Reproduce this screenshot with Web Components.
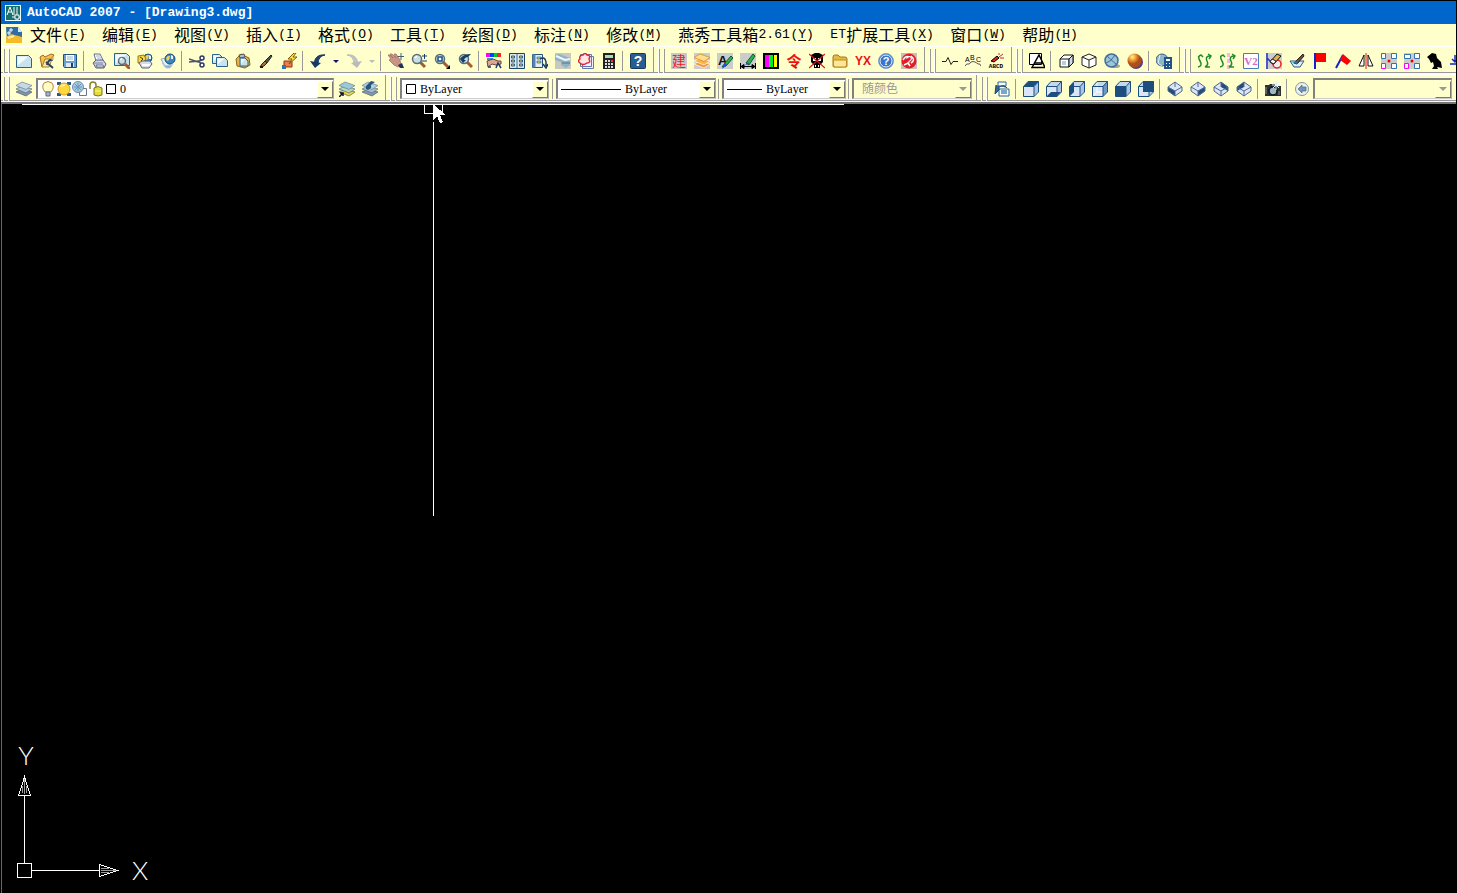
<!DOCTYPE html>
<html lang="zh-CN">
<head>
<meta charset="utf-8">
<title>AutoCAD 2007 - [Drawing3.dwg]</title>
<style>
  html, body { margin: 0; background: #000; }
  body { font: 16px/22px "Liberation Mono", "Noto Sans CJK SC", monospace; color: #000; }
</style>
</head>
<body>
<cad-window>
  <title-bar>AutoCAD 2007 - [Drawing3.dwg]</title-bar>
  <menu-bar>
    <menu-entry key="F">文件</menu-entry>
    <menu-entry key="E">编辑</menu-entry>
    <menu-entry key="V">视图</menu-entry>
    <menu-entry key="I">插入</menu-entry>
    <menu-entry key="O">格式</menu-entry>
    <menu-entry key="T">工具</menu-entry>
    <menu-entry key="D">绘图</menu-entry>
    <menu-entry key="N">标注</menu-entry>
    <menu-entry key="M">修改</menu-entry>
    <menu-entry key="Y" tail="2.61">燕秀工具箱</menu-entry>
    <menu-entry key="X" head="ET">扩展工具</menu-entry>
    <menu-entry key="W">窗口</menu-entry>
    <menu-entry key="H">帮助</menu-entry>
  </menu-bar>
  <tool-row>
    <tool-strip icons="new open save | print preview publish web | cut copy paste brush match | undo drop redo dropoff | pan zoomrt zoomwin zoomprev | props center palette sheet markup calc | help"></tool-strip>
    <tool-strip icons="jian layers2 textedit dimedit colors ling skull folder yx helpround helpred"></tool-strip>
    <tool-strip icons="breakline arctext abcd"></tool-strip>
    <tool-strip icons="wipe | cube3 hex globe ball | globecalc"></tool-strip>
    <tool-strip open icons="swirl swirl2 v2 erase bowl flag flag2 mirror array array2 bird downarrow"></tool-strip>
  </tool-row>
  <tool-row>
    <tool-strip icons="layers">
      <combo-box label="图层" value="0" size="layer" art="layerstate"></combo-box>
      <tool-strip bare icons="layerset layerprev"></tool-strip>
    </tool-strip>
    <tool-strip>
      <combo-box label="颜色" value="ByLayer" size="color" art="swatch"></combo-box>
      <tool-sep></tool-sep>
      <combo-box label="线型" value="ByLayer" size="ltype" art="line64"></combo-box>
      <tool-sep></tool-sep>
      <combo-box label="线宽" value="ByLayer" size="weight" art="line36"></combo-box>
      <tool-sep></tool-sep>
      <combo-box label="打印样式" value="随颜色" size="plot" off></combo-box>
    </tool-strip>
    <tool-strip open icons="views | vtop vbottom vleft vright vfront vback | isw ise ine inw | camera | prev">
      <combo-box label="视图" value="" size="fill" off></combo-box>
    </tool-strip>
  </tool-row>
  <drawing-area></drawing-area>
</cad-window>

<script>
const N = '#1c4f80', L = '#a9c4e4';
const star = (x, y) => `<path d="M${x} ${y-2}v4M${x-2} ${y}h4" stroke="#fff"/>`;
const cube = (faces) => `<path d="M1 5L5 1H15V11L11 15H1Z" fill="#dbe5f8"/><path d="M11 5L15 1V11L11 15Z" fill="${L}"/><path d="M1 5L5 1H15L11 5Z" fill="#c4d8f0"/>${faces}<path d="M.5 5.5H11V15.5H.5ZM.5 5.5L5 .5H15.5L11 5.5M15.5 .5V11L11 15.5" fill="none" stroke="${N}"/>`;
const iso = (f) => `<path d="M8 1L15 6V10L8 15L1 10V6Z" fill="#dce6fa"/>${f}<path d="M8 1L15 6V10L8 15L1 10V6ZM1 6L8 10L15 6M8 10V15M8 1V6" fill="none" stroke="#52688c"/>`;
const lens = (x, y) => `<path d="M${x+3} ${y+3}l5 5" stroke="#a65a32" stroke-width="3"/><circle cx="${x}" cy="${y}" r="4.5" fill="#c6dfe0" stroke="#5c6c78" stroke-width="1.5"/><path d="M${x-2} ${y-1}l2-2" stroke="#fff" stroke-width="1.5"/>`;
const page = (x, y, w, h) => `<path d="M${x} ${y}h${w-3}l3 3v${h-3}h-${w}z" fill="#c9e3ee" stroke="#2b6390"/><path d="M${x+1} ${y+h-2}l${w-4} -${h-3}h-${w-4}z" fill="#f4fbff"/>`;
const stack = (a, b, c) => `<path d="M0 11L6 8l10 3-6 4z" fill="${c}" stroke="#51606c" stroke-width=".7"/><path d="M0 8L6 5l10 3-6 4z" fill="${b}" stroke="#51707c" stroke-width=".7"/><path d="M0 4.5L6 1l10 3.5-6 4z" fill="${a}" stroke="#6b8294" stroke-width=".7"/>`;
const world = (x, y, r) => `<circle cx="${x}" cy="${y}" r="${r}" fill="#3b86bd" stroke="#1d4b7a"/><path d="M${x-r+1} ${y-1}q2-3 4-2l-1 4-2 1z" fill="#e8d25a"/><path d="M${x+1} ${y-r+1}l2 1v3l-2 0z" fill="#e7f3fa"/>`;
const printer = `<path d="M5 8L3 1h6l3 6z" fill="#fff" stroke="#5d6f99"/><path d="M5 3h4M6 5h4" stroke="#9fb0cc"/><path d="M2 10l3-3h7l3 4-2 4H5z" fill="#cfd5e8" stroke="#565f82"/><path d="M5 12h7l1 2H6z" fill="#fff" stroke="#656d8c"/><path d="M3 10h9" stroke="#7981a4"/>`;
const tx = (s, x, y, size, fill, extra = '') => `<text x="${x}" y="${y}" font-size="${size}" fill="${fill}" ${extra}>${s}</text>`;
const curl = (x, f) => f ? `<path d="M${x} 14q5-1 2-6t1-6M${x} 4l3-2 2 2" fill="none" stroke="#218a2d" stroke-width="1.5"/>` : `<path d="M${x} 14h4M${x+5} 3h-2q-4 1-2 5 2 4-2 6M${x+2} 1l3 2-2 3" fill="none" stroke="#218a2d" stroke-width="1.5"/>`;
const arr = (m) => `<path fill="#ccc" d="M0 0h16v16H0z"/><g fill="#fff" stroke="#3173b0"><path d="M.5 ${m ? 1.5 : .5}h${m ? 6 : 4}v${m ? 4 : 5}h-${m ? 6 : 4}zM10.5 .5h5v5h-5zM10.5 10.5h5v5h-5z"/></g><path d="M.5 10.5h4v5h-4z" fill="#fff" stroke="#f0f"/><circle cx="8" cy="8" r="1.5" fill="#e00"/>`;

const ICONS = {
  new: page(.5, 2.5, 15, 12),
  open: '<path d="M1 4l3-2 2 2 6-3 3 1-3 4-9 8z" fill="#f2c24c" stroke="#a56a28"/><path d="M3 14L6 6h7l-3 8z" fill="#ffe69a" stroke="#b57725"/><path d="M7 9l7 6M8 12q1-6 6-5" fill="none" stroke="#1e4765" stroke-width="2"/><path d="M11 5l4-2-1 5z" fill="#c9a66a"/>',
  save: '<path d="M1.5 1.5h13v13h-12l-1-1z" fill="#6ba0d0" stroke="#245282"/><path d="M4 2h8v6H4z" fill="#fff"/><path d="M5 4h6M5 6h6" stroke="#8fb4d5"/><path d="M4 10h8v4H4z" fill="#e1e9f2"/><path d="M9 10h2v4H9z" fill="#1a4270"/>',
  print: printer,
  preview: page(.5, .5, 15, 12) + '<g transform="translate(4 2)">' + lens(4, 6).replace('r="4.5"', 'r="3.5"') + '</g>',
  publish: world(11, 5, 4) + '<path d="M1 3l6-1 2 4-3 4H1z" fill="#f6d83a" stroke="#9b7722"/><path d="M3 4l3 2-2 2" fill="none" stroke="#4b3d10"/><path d="M2 10l3-2 8 0 2 3-3 4H5z" fill="#d7dcec" stroke="#5a6388"/><path d="M5 12h8" stroke="#fff" stroke-width="2"/>',
  web: '<path d="M1 6l7-1 3 6-6 3z" fill="#e8edf6" stroke="#96a9c2"/>' + world(10, 6, 5) + '<path d="M2 10q4 5 11 1l-3 4H6z" fill="#82acdc" stroke="#b8c9de"/>',
  cut: '<path d="M0 6l9 3 5-3M0 9l9-1 5 4" fill="none" stroke="#4a5368" stroke-width="1.5"/><circle cx="13" cy="5" r="2" fill="#fff" stroke="#283a70" stroke-width="1.5"/><circle cx="13" cy="12" r="2" fill="#fff" stroke="#283a70" stroke-width="1.5"/>',
  copy: page(.5, 1.5, 10, 9) + page(4.5, 4.5, 11, 9),
  paste: '<path d="M1 6l5-5 8 4 1 7-5 3-8-2z" fill="#e3b548" stroke="#8c6423"/><path d="M4 2l5-1 1 3-5 1z" fill="#b7bdc4" stroke="#555"/>' + page(5, 5, 8, 8),
  brush: '<path d="M7 8l6-6 1 1-5 7z" fill="#555" stroke="#222"/><path d="M7 8l2 2-3 3-4 1 2-3z" fill="#b46a40" stroke="#3b1c14"/><path d="M2 14h3" stroke="#251512" stroke-width="2"/>',
  match: '<path d="M3 8h8v6H3z" fill="#f07c42" stroke="#922e18"/><path d="M1 12h4v4H1z" fill="#2d74b4"/><path d="M13 0L7 6h4l-3 5 8-7h-4l3-4z" fill="#ffe12d" stroke="#795b13"/>',
  undo: '<path d="M5 12C3 6 8 1 15 2q-7 1-7 9z" fill="#203f70" stroke="#173864"/><path d="M0 8l5 7 6-5z" fill="#173864"/>',
  redo: '<path d="M11 12C13 6 8 1 1 2q7 1 7 9z" fill="#c4c4bc" stroke="#bbb"/><path d="M16 8l-5 7-6-5z" fill="#bbb"/>',
  drop: '<path d="M5 7h6l-3 3z" fill="#151560"/>',
  dropoff: '<path d="M5 7h6l-3 3z" fill="#bbb"/>',
  pan: '<path d="M0 2l2 0 3 3-3-4 2 0 4 4-2-4 2 0 4 6 1 5-3 2-4-2-5-5 2-1z" fill="#c99486" stroke="#9a655b" stroke-width=".7"/><path d="M10 12l4-2 2 5h-4z" fill="#1c3460"/><path d="M13 0v7M9.5 3.5h7" stroke="#37647c"/>',
  zoomrt: lens(6, 6) + '<path d="M11 3h5M13.5 1v5M11 8h5" stroke="#183f66"/>',
  zoomwin: lens(6, 6) + '<path d="M4 4h4v4H4z" fill="#fff" stroke="#175187" stroke-width="1.5"/><path d="M16 12v4h-4z"/>',
  zoomprev: lens(7, 6) + '<path d="M3 6q3-5 11-5l-3 3q-3 0-4 3h2l-3 3-3-4z" fill="#173f65"/>',
  props: '<path d="M0 0h4v4H0z" fill="#f0f"/><path d="M4 0h4v4H4z" fill="#04f"/><path d="M8 0h3v4H8z" fill="#0c3"/><path d="M11 0h4v4h-4z" fill="#f22"/><path d="M1 5h6v2H1z" fill="#39c"/><path d="M1 8l6-2 5 2 3 0v3l-5 1-4-1-4 3z" fill="#d9a898" stroke="#73412b"/><path d="M10 15l2-5 3 5M2 14h3" stroke="#173f75" fill="none" stroke-width="1.5"/>',
  center: '<path d="M.5 .5h15v15H.5z" fill="#dbe8f0" stroke="#1d4367"/><path d="M8 1v14" stroke="#35719f" stroke-width="1"/><g fill="#e6d34f" stroke="#315d84"><path d="M2.5 3h3v2h-3zM2.5 7h3v2h-3zM2.5 11h3v2h-3zM10.5 3h3v2h-3zM10.5 7h3v2h-3zM10.5 11h3v2h-3z"/></g>',
  palette: '<path d="M.5 1.5h10v13H.5z" fill="#e4eef8" stroke="#27527b"/><path d="M.5 1.5h3v13h-3z" fill="#5585b2"/><path d="M5 4h4v2H5zM5 8h4v2H5z" fill="#d9cc45" stroke="#326798" stroke-width=".7"/><path d="M8 6q5-3 6 3v4M11 11l3 4 2-4" fill="none" stroke="#173f6a" stroke-width="1.5"/>',
  sheet: '<path fill="#c9c9bd" d="M0 0h16v16H0z"/><path d="M0 2l4-1 11 4v7l-4 3-5-3V9L0 7z" fill="#91b3c6"/><path d="M1 3l9 4 5-1" stroke="#eef8fb" stroke-width="2" fill="none"/><path d="M7 10h8" stroke="#51758f"/>',
  markup: '<path d="M4.5 3.5h11v12h-11zM2.500 1.500h11v12h-11z" fill="#eef4ff" stroke="#6079b0"/><path d="M2 10q-3-2 0-4-1-4 3-4 2-3 4 0 4 0 2 4 2 4-2 4-4 3-7 0z" fill="#ffe7e7" stroke="#e22435" stroke-width="1.5"/>'.replaceAll('.500', '.5'),
  calc: '<path d="M2 0h12v16H2z" fill="#222"/><path d="M4 2h8v3H4z" fill="#a8dbb8"/><path d="M4 7h2v2H4zM7 7h2v2H7zM4 10h2v2H4zM7 10h2v2H7zM4 13h2v2H4zM7 13h2v2H7zM10 10h2v2h-2zM10 13h2v2h-2z" fill="#ddd"/><path d="M10 7h2v2h-2z" fill="#f33"/>',
  help: '<rect x=".5" y=".5" width="15" height="15" rx="1" fill="#2a5e92" stroke="#15395e"/>' + tx('?', 8, 13, 14, '#fff', 'text-anchor="middle" font-weight="bold"'),
  jian: '<path fill="#c8c8c8" d="M0 0h16v16H0z"/>' + tx('建', 8, 13, 14, '#e22', 'text-anchor="middle"'),
  layers2: '<path fill="#ccc" d="M0 0h16v16H0z"/>' + stack('#ffe08a', '#ffb347', '#f49536').replaceAll('#51707c', '#fff').replaceAll('#51606c', '#fff').replaceAll('#6b8294', '#d98020'),
  textedit: '<path fill="#ccc" d="M0 0h16v16H0z"/>' + tx('A', 1, 12, 13, '#111', 'font-weight="bold"') + '<path d="M5 14l3-4 6-7 2 2-7 8z" fill="#2db34a" stroke="#0b5930"/><path d="M8 10l2 2-5 4z" fill="#24f"/>',
  dimedit: '<path fill="#ccc" d="M0 0h16v16H0z"/><path d="M.5 10v6M15.5 10v6M1 13.5h14M1 13.5l3-2v4zM15 13.5l-3-2v4z" stroke="#000"/><path d="M6 10L13 1l2 2-6 9z" fill="#2db34a" stroke="#0b5930"/><path d="M5 12l3-3 1 2z" fill="#24f"/>',
  colors: '<path d="M0 0h16v16H0z"/><path d="M2 2h4v12H2z" fill="#f0f"/><path d="M6 2h4v12H6z" fill="#0e2"/><path d="M11 2h3v12h-3z" fill="#ff0"/>',
  ling: tx('令', 8, 14, 15, '#e11', 'text-anchor="middle" font-weight="bold"'),
  skull: '<path d="M2 2l4-2h4l4 2v7l-3 3v3H5v-3L2 9z"/><path d="M4 5h3v3H4zM9 5h3v3H9zM6 12h1v2H6zM9 12h1v2H9z" fill="#fff"/><path d="M0 1l16 14M16 1L0 15" stroke="#d11" stroke-width="1.2"/>',
  folder: '<path d="M1 4q0-2 2-2h3l2 2h5q2 0 2 2v7q0 1-1 1H2q-1 0-1-1z" fill="#e7b940" stroke="#a87918"/><path d="M1.5 7h13v5q0 2-2 2h-9q-2 0-2-2z" fill="#ffe796" stroke="#bb8c27"/>',
  yx: tx('YX', 8, 12, 12, '#e11', 'text-anchor="middle" font-weight="bold"'),
  helpround: '<circle cx="8" cy="8" r="7.5" fill="#3775c9" stroke="#7c9fd0"/><circle cx="8" cy="8" r="6" fill="none" stroke="#e8f1ff"/>' + tx('?', 8, 12, 11, '#fff', 'text-anchor="middle" font-weight="bold"'),
  helpred: '<path fill="#c9bdbd" d="M0 0h16v16H0z"/><circle cx="8" cy="8" r="7.5" fill="#e31d24"/><path d="M2 7q3-5 6-3M10 3q5 4 0 7M3 12l4-2 2 3" fill="none" stroke="#fff" stroke-width="1.5"/>' + tx('?', 8, 12, 12, '#fff', 'text-anchor="middle"'),
  breakline: '<path d="M0 8.5h4l2-4 3 7 2-3h5" fill="none" stroke="#222"/>',
  arctext: tx('A', 0, 9, 7, '#000') + tx('B', 5, 7, 7, '#000') + tx('C', 11, 9, 7, '#000') + '<path d="M0 13q2-3 3-2t3-2q2-1 4 0t3 2q2-1 3 2" fill="none" stroke="#555"/>',
  abcd: tx('ABCD', 8, 15, 6, '#000', 'text-anchor="middle" font-weight="bold" font-family="Liberation Mono, monospace"') + '<path d="M3 8l6-5 2 2-5 4z" fill="#d22" stroke="#000"/><path d="M11 4l4-3M12 5h4M11 2V0" stroke="#a33"/>',
  wipe: '<path d="M.5 .5h12v11H.5z" fill="#fff" stroke="#000"/><path d="M3 14.500L10 2l6 12.500zM6 10h8" fill="none" stroke="#000" stroke-width="1.500"/>'.replaceAll('.500', '.5'),
  cube3: '<path d="M2 6L6 2h9v8l-4 4H2z" fill="#fff" stroke="#111"/><path d="M2 6h9v8M11 6l4-4" stroke="#111" fill="none"/><path d="M4 8h4v4H4z" fill="#b5cde5"/><path d="M11 6l4-4v8l-4 4z" fill="#cbdced" stroke="#111"/>',
  hex: '<path d="M8 1l7 3v8l-7 3-7-3V4zM1 4l7 3 7-3M8 7v8" fill="#fff" stroke="#222"/>',
  globe: '<ellipse cx="11" cy="13" rx="5" ry="2" fill="#a7a78c"/><circle cx="7.5" cy="7.5" r="6.5" fill="#9fc3d8" stroke="#426f98" stroke-width="1.5"/><path d="M3 3l10 9M2 10q5-1 9-8" fill="none" stroke="#3b6f9c"/>',
  ball: '<defs><radialGradient id="g" cx=".35" cy=".25"><stop stop-color="#fff2a0"/><stop offset=".45" stop-color="#f2a632"/><stop offset="1" stop-color="#b14b19"/></radialGradient></defs><circle cx="9" cy="9" r="7" fill="#4f4284"/><circle cx="7.5" cy="7.5" r="7" fill="url(#g)"/>',
  globecalc: '<circle cx="6" cy="7" r="6" fill="#8eb6c7" stroke="#365f89"/><path d="M4 2l-2 8 4 3" fill="none" stroke="#e6f2f5"/><path d="M8 4h8v12H8z" fill="#20558a"/><path d="M10 6h4v2h-4zM10 10h1v1h-1zM13 10h1v1h-1zM10 13h1v1h-1zM13 13h1v1h-1z" fill="#fff"/>',
  swirl: curl(1, 1) + curl(9, 0),
  swirl2: '<path d="M7 0h3v4H7zM7 6h3v4H7zM7 12h3v4H7z" fill="#f6b4f0"/>' + curl(0, 1) + curl(10, 0),
  v2: '<path d="M.5 .5h15v15H.5z" fill="#fff" stroke="#4580b5"/>' + tx('V2', 8, 12, 11, '#d56cc4', 'text-anchor="middle" font-weight="bold" font-family="Liberation Serif, serif"'),
  erase: '<path fill="#ccc" d="M0 0h16v16H0z"/><path d="M1 0v16M1 5l9 9" stroke="#23c" stroke-width="1.5"/><circle cx="11" cy="11" r="4" fill="#eee" stroke="#e22" stroke-width="1.5"/><path d="M4 9L11 1l4 2-7 8z" fill="#e5ad58" stroke="#111"/><path d="M4 9l4 2 2-3-4-2z" fill="#fff" stroke="#222"/>',
  bowl: '<path d="M1 8h14l-4 6H5z" fill="#d9ecf7" stroke="#255b8d"/><path d="M5 10L14 1l1 2-7 8z" fill="#6c5144" stroke="#292222"/><path d="M3 10l4-2 2 3z" fill="#2c78a8"/>',
  flag: '<path d="M3 0v16" stroke="#12c" stroke-width="2"/><path d="M4 0h10v9H4z" fill="#f00"/>',
  flag2: '<path d="M1 15L8 2" stroke="#12c" stroke-width="2"/><path d="M8 1l8 7-4 4-7-5z" fill="#f00"/>',
  mirror: '<path d="M6 2v11H1zM10 2v11h5z" fill="#fff" stroke="#111"/><path d="M8 0v16" stroke="#e11"/>',
  array: arr(0), array2: arr(1),
  bird: '<path d="M0 4l5-4 4 1 1 4 4 4 1 6-5-1 1 2H5l2-3-1-4-2 1-2-4z"/>',
  downarrow: '<path d="M5 2v7M2 6l3 3 3-3M0 11h16" fill="none" stroke="#12c" stroke-width="1.5"/>',
  layers: stack('#c8d8e6', '#b2c8da', '#8195a8'),
  layerset: stack('#9bc7df', '#b6dcb2', '#f4d33c') + '<path d="M0 16l4-4M1 12h3v3" stroke="#113" fill="none" stroke-width="1.5"/>',
  layerprev: stack('#b5cde0', '#a5bccd', '#8499ac') + '<path d="M4 8V5l5-5 4 1-4 3v3l-3 2z" fill="#28557c"/>',
  views: '<path d="M4 1h8v4H4zM5 8h10v7H5z" fill="#fff" stroke="#2563a0"/><path d="M2 4l-1 9 4-4V6q5-3 8 1" fill="#38668e" stroke="#174677"/><path d="M7 10h6M7 12h6" stroke="#4e8abc" stroke-width="1.5"/>',
  vtop: cube(`<path d="M1 5L5 1H15L11 5Z" fill="${N}"/>`),
  vbottom: cube(`<path d="M1 15L5 11H15L11 15Z" fill="${N}"/>`),
  vleft: cube(`<path d="M1 5L5 1V11L1 15Z" fill="${N}"/>`),
  vright: cube(`<path d="M11 5L15 1V11L11 15Z" fill="#6c98c4"/><path d="M5 2V11H11M5 11L1 15" stroke="#fff" fill="none"/>`),
  vfront: cube(`<path d="M1 5H11V15H1Z" fill="${N}"/>`),
  vback: cube(`<path d="M5 1H15V11H5Z" fill="${N}"/>`),
  isw: iso(`<path d="M1 6L8 10V15L1 10Z" fill="${N}"/>`),
  ise: iso(`<path d="M8 10L15 6V10L8 15Z" fill="${N}"/>`),
  ine: iso(`<path d="M8 1L15 6V10L8 6Z" fill="${N}"/>`),
  inw: iso(`<path d="M8 1L1 6V10L8 6Z" fill="${N}"/>`),
  camera: '<path d="M0 4h4l1-1h5l2 2h4v10H0z" fill="#2a3036"/><circle cx="8" cy="10" r="4" fill="#9ab9c4" stroke="#11161a" stroke-width="1.5"/><path d="M11 0v9M7 4h8M8 1l6 6M14 1L8 7" stroke="#d9f2f8"/><path d="M1 6v7M14 10v4" stroke="#89939c"/>',
  prev: '<circle cx="8" cy="8" r="6.5" fill="#eef1e6" stroke="#7f95ad"/><path d="M4 8l4-4v2h4v4H8v2z" fill="#7793b4" stroke="#47678d" stroke-width=".7"/>',
  logo: '<path d="M0 0h16v16H0z" fill="#e9ffff"/><path d="M1 1h14v14H1z" fill="#16706d"/><path d="M2 10L5 2l3 8M3 7h4M9 2v8M12 2v13M7 12h9" fill="none" stroke="#fff"/><path d="M10 10h4v4h-4z" fill="#16706d" stroke="#fff"/>',
  dwg: '<path d="M0 0h12l4 5v10H1z" fill="#2f6ca8"/><path d="M12 0l4 5h-4z" fill="#d6ecf8"/><path d="M0 10l5-3 11 3v6H0z" fill="#f6b928"/><path d="M2 11l6-2" stroke="#fff0a8" stroke-width="2"/>' + star(5, 3) + star(3, 6),
  bulb: '<path d="M5 11Q1 6 4 2q4-3 8 0 3 4-1 9z" fill="#fffbc4" stroke="#b48a29"/><path d="M6 11h4v4H6z" fill="#a8b8cc" stroke="#5a6b81"/><path d="M6 4q-1 2 0 4" stroke="#fff" fill="none"/>',
  sun: '<path d="M1 1h4v3H1zM11 1h4v3h-4zM1 12h4v3H1zM11 12h4v3h-4z" fill="#2a5880"/><circle cx="8" cy="8" r="6" fill="#ffd83c" stroke="#d29a23"/><path d="M5 6q1-2 4-2" stroke="#fff6ae" fill="none" stroke-width="1.5"/>',
  viewport: '<path d="M7.5 7.5h7v7h-7z" fill="#fff" stroke="#687886"/><circle cx="6" cy="6" r="5.5" fill="#a8cbe1" stroke="#6590b2"/><path d="M2 6h8M6 2v8M3 3l6 6M9 3L3 9" stroke="#6c95b6"/>',
  lock: '<path d="M2 8V4q0-3 3-3t3 3v3" fill="none" stroke="#85812a" stroke-width="1.5"/><path d="M6 7q4-3 8 0v7q-4 2-8 0z" fill="#e3db3e" stroke="#797421"/><path d="M7 10h6" stroke="#fff79a"/>',
  swatch: '<path d="M2.5 3.5h9v9h-9z" fill="#fff" stroke="#000"/>',
};
const svg = (name) => `<svg width="16" height="16" viewBox="0 0 16 16" aria-hidden="true" font-family="'Liberation Sans', 'Noto Sans CJK SC', sans-serif">${ICONS[name]}</svg>`;

function define(tag, css, html) {
  customElements.define(tag, class extends HTMLElement {
    constructor() { super(); this.attachShadow({ mode: 'open' }); }
    connectedCallback() {
      const body = typeof html === 'function' ? html(this) : html;
      this.shadowRoot.innerHTML = `<style>:host, * { box-sizing: border-box; } svg { display: block; flex: none; } ${css}</style>${body}`;
    }
  });
}

define('cad-window', `
  :host { display: flex; flex-direction: column; min-height: 100vh; padding: 1px 1px 0 1px; background: #000; overflow: hidden; }`,
  '<slot></slot>');

define('title-bar', `
  :host { display: flex; align-items: center; gap: 6px; height: 23px; padding: 0 4px; background: #0066cc; color: #fff; }
  h1 { margin: 0; font: bold 13px/22px "Liberation Mono", monospace; white-space: pre; }`,
  () => `${svg('logo')}<h1><slot></slot></h1>`);

define('menu-bar', `
  :host { display: flex; align-items: center; height: 22px; padding-left: 5px; background: #ffffcc; white-space: nowrap; }`,
  () => `${svg('dwg')}<slot></slot>`);

define('menu-entry', `
  :host { display: block; }
  button { display: flex; border: 0; padding: 0 8px; background: none; color: #000; font: 16px/22px "Noto Sans CJK SC", sans-serif; }
  .cell { font: 13px/24px "Liberation Mono", monospace; text-align: center; flex: none; }
  .w16 { width: 16px; } .w24 { width: 24px; } .w32 { width: 32px; }
  u { text-underline-offset: 2px; }`,
  (el) => {
    const lat = (s) => s ? `<span class="cell w${s.length * 8}">${s}</span>` : '';
    return `<button type="button">${lat(el.getAttribute('head'))}<slot></slot>${lat(el.getAttribute('tail'))}<span class="cell w24">(<u>${el.getAttribute('key')}</u>)</span></button>`;
  });

define('tool-row', `
  :host { display: flex; height: 28px; background: #ffffcc; border-top: 1px solid #fff; box-shadow: inset 0 -1px #ffffcc, inset 0 -2px #999; overflow: hidden; }`,
  '<slot></slot>');

define('tool-sep', `
  :host { display: block; flex: none; width: 6px; height: 20px; padding-left: 2px; }
  i { display: block; width: 1px; height: 100%; background: #999; }`, '<i></i>');

define('tool-button', `
  :host { display: block; flex: none; width: 23px; }
  :host([narrow]) { width: 13px; }
  button { display: flex; justify-content: center; width: 100%; height: 22px; padding: 0; align-items: center; border: 0; background: none; }`,
  (el) => `<button type="button" aria-label="${el.getAttribute('icon')}">${svg(el.getAttribute('icon'))}</button>`);

define('tool-strip', `
  :host { display: flex; flex: none; align-items: center; height: 26px; padding: 1px 4px 0 0; border-right: 1px solid #999; margin-right: 2px; }
  :host([open]) { flex: 1 0 0; border-right: 0; margin: 0; min-width: 0; }
  :host([bare]) { padding: 0; border: 0; margin: 0 0 0 1px; }
  .grip { flex: none; width: 11px; height: 24px; padding-left: 2px; display: flex; gap: 3px; }
  .grip i { width: 2px; border-right: 1px solid #999; border-left: 1px solid #fff; }`,
  (el) => {
    const items = (el.getAttribute('icons') || '').split(' ').filter(Boolean).map((n) =>
      n === '|' ? '<tool-sep></tool-sep>' : `<tool-button icon="${n}"${n.startsWith('drop') ? ' narrow' : ''}></tool-button>`).join('');
    return `${el.hasAttribute('bare') ? '' : '<span class="grip"><i></i><i></i></span>'}${items}<slot></slot>`;
  });

define('combo-box', `
  :host { display: flex; flex: none; align-items: center; height: 21px; padding-left: 2px; background: #fff; border: 1px solid #808080; border-width: 2px 1px 1px 2px; border-right-color: #aaa; border-bottom-color: #ccc; }
  :host([size=layer]) { width: 298px; margin-left: 1px; } :host([size=color]) { width: 149px; margin: 0 1px; } :host([size=ltype]) { width: 160px; }
  :host([size=weight]) { width: 124px; } :host([size=plot]) { width: 120px; } :host([size=fill]) { flex: 1 0 0; }
  :host([off]) { background: #ffffcc; color: #999; }
  select { appearance: none; flex: 1; min-width: 0; width: 0; height: 16px; padding: 0; border: 0; background: none; color: inherit; opacity: 1; font: 12px/16px "Liberation Serif", "Noto Sans CJK SC", serif; }
  :host([off]) select { padding-left: 6px; }
  .arrow { display: flex; align-items: center; justify-content: center; flex: none; width: 16px; height: 17px; background: #ffffcc; border: 1px solid #fff; border-right-color: #777; border-bottom-color: #777; }
  .arrow i { border: 4px solid transparent; border-top-color: #000; border-bottom: 0; }
  :host([off]) .arrow i { border-top-color: #999; }
  .rule { flex: none; height: 1px; margin: 0 4px 0 1px; background: #000; }
  .line64 { width: 60px; } .line36 { width: 35px; }`,
  (el) => {
    const art = el.getAttribute('art') || '';
    const lead = art === 'layerstate' ? ['bulb', 'sun', 'viewport', 'lock', 'swatch'].map(svg).join('')
      : art === 'swatch' ? svg('swatch') : art ? `<span class="rule ${art}"></span>` : '';
    return `${lead}<select aria-label="${el.getAttribute('label')}"${el.hasAttribute('off') ? ' disabled' : ''}><option>${el.getAttribute('value')}</option></select><span class="arrow"><i></i></span>`;
  });

define('drawing-area', `
  :host { display: flex; flex: 1; flex-direction: column; justify-content: space-between; border-left: 1px solid #666; border-top: 2px solid #777; background: #000; }
  svg { shape-rendering: crispEdges; }
  text { font: 300 26px "Lato", sans-serif; fill: #fff; }`,
  `<svg width="860" height="420" fill="none" stroke="#fff">
    <path d="M20 .5H842M431.5 18V412M422.5 1V9.5H431M440.5 1V8"/>
    <path d="M431 0V16l4-4 3 7 3-1-3-7h6z" fill="#fff" stroke="none"/>
  </svg>
  <svg width="160" height="156" viewBox="0 -6 160 156" fill="none" stroke="#fff">
    <path d="M15.5 120.5h14v14h-14zM22.5 120V52M30 127.5h68M16.5 52.5h12L22.5 34zM97.5 121.5v12l18-6z"/>
    <path d="M20.5 50V43M22.5 51V36M24.5 50V43M99 125.5h8M99 127.5h15M99 129.5h8" stroke="#999"/>
    <text x="24" y="22" text-anchor="middle" stroke="none">Y</text>
    <text x="138" y="137" text-anchor="middle" stroke="none">X</text>
  </svg>`);
</script>
</body>
</html>
